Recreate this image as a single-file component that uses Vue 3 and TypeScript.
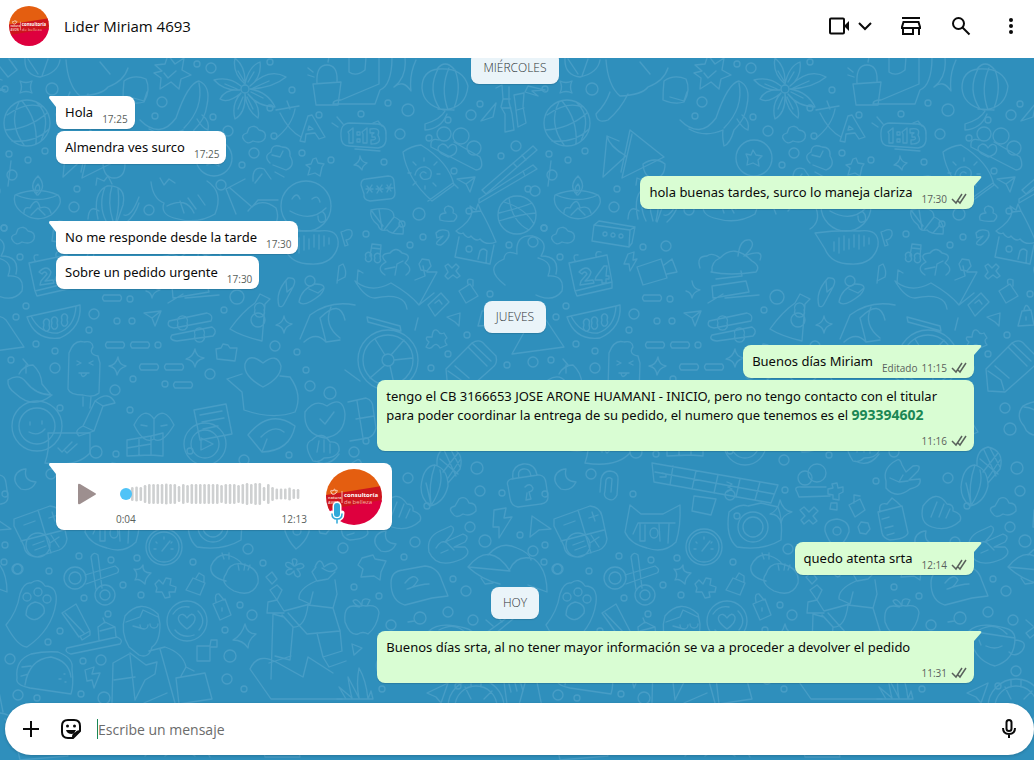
<script setup lang="ts">
import { ref } from 'vue'

interface Message {
  kind: 'note' | 'voice'
  from: 'in' | 'out'
  tail?: boolean
  block?: boolean
  lines?: string[]
  phone?: string
  edited?: boolean
  time: string
}
interface Entry {
  day?: string
  messages?: Message[]
}

const draft = ref('')
const position = ref(0)

const entries: Entry[] = [
  { day: 'MIÉRCOLES' },
  {
    messages: [
      { kind: 'note', from: 'in', tail: true, lines: ['Hola'], time: '17:25' },
      { kind: 'note', from: 'in', lines: ['Almendra ves surco'], time: '17:25' },
    ],
  },
  { messages: [{ kind: 'note', from: 'out', tail: true, lines: ['hola buenas tardes, surco lo maneja clariza'], time: '17:30' }] },
  {
    messages: [
      { kind: 'note', from: 'in', tail: true, lines: ['No me responde desde la tarde'], time: '17:30' },
      { kind: 'note', from: 'in', lines: ['Sobre un pedido urgente'], time: '17:30' },
    ],
  },
  { day: 'JUEVES' },
  {
    messages: [
      { kind: 'note', from: 'out', tail: true, lines: ['Buenos días Miriam'], edited: true, time: '11:15' },
      {
        kind: 'note',
        from: 'out',
        block: true,
        lines: [
          'tengo el CB 3166653 JOSE ARONE HUAMANI - INICIO, pero no tengo contacto con el titular',
          'para poder coordinar la entrega de su pedido, el numero que tenemos es el ',
        ],
        phone: '993394602',
        time: '11:16',
      },
    ],
  },
  { messages: [{ kind: 'voice', from: 'in', tail: true, time: '12:13' }] },
  { messages: [{ kind: 'note', from: 'out', tail: true, lines: ['quedo atenta srta'], time: '12:14' }] },
  { day: 'HOY' },
  {
    messages: [
      {
        kind: 'note',
        from: 'out',
        tail: true,
        block: true,
        lines: ['Buenos días srta, al no tener mayor información se va a proceder a devolver el pedido'],
        time: '11:31',
      },
    ],
  },
]

const bars: number[] = [
  14, 15, 14, 18, 20, 20, 20, 20, 21, 20, 20, 16, 20, 18, 20, 20, 20, 20, 20, 20, 20, 18, 20, 20, 20, 18, 20, 22, 20, 22,
  22, 14, 20, 14, 11, 11, 11, 13, 10, 10,
]

const dots: number[][] = [
  [197, 64, 3], [211, 68, 5], [270, 62, 3], [5, 89, 3], [52, 89, 6], [162, 102, 5], [292, 90, 3], [155, 116, 3],
  [213, 117, 3], [228, 131, 5], [270, 108, 3], [319, 115, 3], [274, 136, 3], [254, 153, 5], [9, 154, 3], [28, 160, 3],
  [45, 151, 3], [242, 165, 3], [302, 153, 3], [331, 160, 3], [388, 103, 3], [408, 110, 6], [361, 114, 3], [480, 104, 3],
  [471, 115, 5], [448, 120, 3], [400, 134, 5], [429, 138, 3], [384, 162, 3], [516, 146, 5], [501, 156, 3], [454, 171, 3],
  [528, 189, 3], [12, 175, 5], [535, 191, 5], [74, 207, 5], [77, 189, 3], [149, 210, 5], [221, 185, 5], [4, 228, 3],
  [419, 214, 6], [402, 224, 3], [366, 234, 3], [423, 237, 3], [410, 245, 3], [509, 245, 3], [533, 242, 5], [469, 211, 3],
  [544, 228, 3], [103, 247, 3], [126, 246, 5], [20, 257, 3], [310, 281, 5], [237, 297, 7], [130, 299, 3],
  [94, 314, 5], [117, 321, 3], [132, 321, 3], [89, 330, 3], [16, 317, 3], [36, 344, 3], [55, 351, 3], [158, 345, 3],
  [224, 310, 3], [275, 346, 5], [297, 352, 3], [11, 360, 3], [26, 306, 3], [55, 368, 5], [115, 390, 5], [133, 379, 3],
  [165, 384, 3], [210, 374, 5], [306, 370, 3], [310, 386, 5], [330, 393, 6], [490, 294, 3], [467, 335, 3], [448, 354, 3],
  [431, 368, 3], [507, 365, 3], [533, 362, 5], [465, 408, 5], [470, 429, 6], [354, 452, 5], [366, 441, 3], [477, 468, 6],
  [408, 478, 5], [480, 491, 5], [502, 493, 3], [51, 474, 5], [93, 494, 3], [96, 452, 6], [116, 454, 3], [190, 451, 3],
  [244, 460, 5], [289, 455, 3], [5, 494, 3], [60, 408, 3], [130, 410, 3], [190, 495, 5],
  [245, 490, 3], [336, 481, 3], [427, 506, 3], [470, 527, 5], [415, 542, 5], [404, 557, 3], [485, 541, 6],
  [520, 535, 3], [545, 545, 3], [533, 551, 5], [544, 562, 3], [557, 569, 5], [453, 579, 3], [466, 591, 5], [354, 587, 3],
  [379, 596, 3], [448, 612, 5], [391, 625, 5], [473, 620, 5], [79, 556, 3], [18, 569, 5], [49, 571, 3], [111, 560, 3],
  [123, 585, 3], [137, 558, 3], [141, 595, 3], [84, 598, 3], [108, 614, 3], [60, 631, 3], [48, 642, 3], [10, 659, 5],
  [83, 661, 3], [101, 660, 5], [18, 695, 5], [37, 698, 3], [81, 694, 3], [104, 698, 6], [230, 656, 6], [227, 679, 5],
  [244, 689, 3], [252, 615, 5], [225, 630, 3], [193, 562, 3], [240, 605, 3], [248, 549, 5], [263, 563, 3], [458, 686, 3],
  [476, 671, 5], [480, 735, 4], [382, 689, 3], [343, 548, 5], [326, 730, 5], [200, 731, 3], [120, 728, 4], [415, 725, 3],
]

// Each doodle: x, y of its origin, then the outline drawn around that origin.
const doodles: [number, number, string][] = [
  [26, 87, 'M-6-6Q0-3 6-6Q3 0 6 6Q0 3-6 6Q-3 0-6-6Z'],
  [10, 68, 'M-14-6L-2 9L7 2L-1-9M-20 8L-8 12'],
  [40, 65, 'M-15-7Q-16 10 0 12Q18 8 20-5M-12-6L-2 9M8-6L2 11'],
  [90, 82, 'M-24-22Q-22 4-10 14Q12 13 18 5Q34-1 38-14M-20 10Q-24 22-34 32Q-33 42-22 38Q-10 28-2 12M10-20L20-8'],
  [137, 88, 'M-13-7Q-3-14 9-9Q14 2 7 14Q-2 17-14 12Q-14 2-13-7ZM-7 9L7 13L10 4'],
  [170, 73, 'M-15-8L-5-9L-2-18L5-9L14-15L12-3L21 2L11 6L9 16L1 9L-10 16L-9 5L-16 0L-8-2ZM-6 0L-2 5L6-2'],
  [245, 89, 'M0-5Q-13-16-10-31Q1-22 0-5Q4-23 15-27Q17-12 5-3Q24-22 41-12Q28-1 5 0Q23 3 30 18Q12 17 3 5Q16 16 13 29Q2 22 0 5Q1 24-10 30Q-14 15-4 4Q-17 15-25 10Q-20 0-5 1Q-21 2-31-9Q-16-13-4-3M-7-18L-1-8M9-17L3-7M24-8L8-1M18 9L6 3M8 20L2 8M-7 20L-2 8M-20-5L-8 0'],
  [245, 89, 'M-4 0a4 4 0 1 0 8 0a4 4 0 1 0-8 0'],
  [190, 110, 'M-50 10Q-30 30-14 8Q-2-27 9-29Q21-24 17-5Q15 10 4 20Q0 34-6 36Q-8 26-7 20Q-25 28-41 19M9-27Q14-2-6 18M7 9Q13 19 18 20Q20 11 12 5'],
  [27, 123, 'M-23 0a23 23 0 1 0 46 0a23 23 0 1 0-46 0M-20-8Q0-22 15-16M-22 7Q2 6 20-10M-15 18Q8 20 22 6M-8-21Q-19 0-3 22M-5-22Q11-3 9 21M10-20Q25-6 14 18'],
  [277, 118, 'M-1-8L22-12M10-17L13-9M3-5Q12 13 24 19M18-9Q15 8-2 21'],
  [307, 133, 'M-7 8L1-17L5-18L18 4L12 6L8 0L-1 1L-2 9ZM2-7L6-4L1-3Z'],
  [253, 134, 'M-4-6Q2-10 6-4Q14-3 12 4Q9 10 0 7Q-6 11-9 6Q-13 1-6-1Z'],
  [327, 85, 'M-14-1L14-3L11 20L-11 20ZM-10-2Q-11-20 0-20Q11-20 10-3M-13-8L-19-10M-14-13L-19-17M1-23L2-28'],
  [367, 82, 'M-18-24L-18-10Q-11-5-2-12L-1-25M12-24V2L-26 18Q-34 18-34 22H8L13 8Q25 3 25-25'],
  [404, 74, 'M-10 13Q3 3 1-16M-10 13Q-1 5 7 17Q5 1 12-14'],
  [445, 88, 'M-23 0Q-23-17-7-19Q18-21 23-2Q21 20-1 22Q-22 17-23 0ZM-7-19Q-18 2-5 21M4-20Q-5 0 3 22M10-18Q17 0 9 20M-8-19Q0-29 9-19M-7 21L9 22M0 23Q-4 31-20 36V42Q-4 41 2 26'],
  [510, 105, 'M-14-17L-8-20L-7-6L-9 2L-5 9L-5 27L4 25L2 9L-1-3V-18M-7-6H0M-8 3H1M5-3L8 22L16 18L13 2L14-12L4-10ZM7 5L14 3M15-13L28-9L22-14L35-15L18-19ZM-17 12L-29 16L-14-2Z'],
  [365, 136, 'M-15-13L13-12Q22-11 21 0Q22 11 13 12L-16 10Q-24 10-24 0Q-25-13-15-13ZM8-13L13-15L17-10M-10 13L15 15M-28-19L-22-12M-33-13L-27-9'],
  [365, 136, 'M-17-4L-12-8V7H-16V-2ZM-8-4h3v3h-3ZM-8 3h3v3h-3ZM-3-4L2-8V7H-2V-2ZM5-7Q16-9 13-1Q18 8 6 8V4Q12 4 10 1H7V-2Q12-4 5-3Z'],
  [425, 174, 'M-22-22Q-14-28-4-29Q24-12 29 11L7 27Q-18 5-22-22ZM3 27L28 9L33 14M-10 1Q-8-8 1-7Q9-4 5 4Q-3 8-5 1Q-3-4 1-1M-14-1H-17M12 0H15M-1-13V-16M0 12V15M-9-9L-12-12M8 9L11 12M9-9L12-12M-9 8L-12 11'],
  [452, 143, 'M-15-9a7 7 0 1 0 14 0a7 7 0 1 0-14 0M1-7a8 8 0 1 0 16 0a8 8 0 1 0-16 0M15 5a7 7 0 1 0 14 0a7 7 0 1 0-14 0M-13-3Q-22-6-21 4L24 27Q33 26 28 14L2-1M-10 11Q-18 5-10 1Q-6 1-4 5Q0-1 4 3Q7 11-4 14Z'],
  [510, 172, 'M-28 18L23-26L27-22L-24 22ZM-31 27L23-7L27-3L-31 31ZM12-17L16-12M3-9L7-5M13-1L15 4'],
  [361, 163, 'M-1-7Q0-1 6 0Q1 3 1 7Q-2 2-7 2Q-1-1-1-7Z'],
  [379, 188, 'M-13-9L9-12Q15-12 15-6L16 5Q16 11 10 11L-9 13Q-16 12-15 6L-18-3Q-18-9-13-9ZM-12-2L-7 4M-7-3L-12 5M-13 1H-6M-2-2L3 4M3-3L-2 5M-3 1H4M8-3L12 3M12-4L8 4M7 0H14'],
  [467, 184, 'M-10-5L8-7L3 8L-1 0ZM-1 0L7-6'],
  [517, 215, 'M-19 0a19 19 0 1 0 38 0a19 19 0 1 0-38 0M-13-13Q8-7 17 9M-8-17Q-5 7 12 15M-18-2Q6-8 15-12M-18 6Q4-1 19-2'],
  [37, 205, 'M-22-10Q0-19 21-10Q28-2 14 10Q0 18-13 9Q-25 1-22-10ZM-21-10Q1-1 21-10M-13 8Q-13 1-7 3Q0-10 3 3Q12 0 14 8M-6 10L1 3L8 10M0-10Q-9-19 1-29Q10-19 1-10M0-12Q-4-16 1-21Q5-16 0-12'],
  [115, 205, 'M-17 14Q-23-12-8-19Q12-20 8 0L2 17M-10-18Q-17 0-9 16M-3-19Q-8-3-2 16M3-17Q5 0 1 16M-16 6Q-26-1-27 14M9 10Q16 13 24-8M12 17Q20 10 24-2M-19-20L-18-27L-11-24L-7-29L-3-21'],
  [185, 200, 'M-34-18Q-32-1-21 3Q-25 14-11 18Q12 25 30 14Q39-8 22-19M-18 6Q1-4 9 13M-5 1L-1 13M3-2L11 9M13-5L20 5M-25-22L-21-15L-16-21L-10-17'],
  [250, 198, 'M-24-9L-5-19M-24-9L-14 16M-20-10L2 9L8 2L28 2M-2 13Q10-2 26 10Q31 24 20 31'],
  [306, 206, 'M-25 0a25 25 0 1 0 50 0a25 25 0 1 0-50 0M-14-7Q-9-15-6-7M6-7Q12-12 14-4M-16 5Q5 17 20 2M12 10Q12 19 19 15Q21 10 17 6'],
  [309, 241, 'M-34-8Q-12-11 10-10Q31-13 29 5Q24 24 2 23Q-18 23-24 8ZM-15 1V10M-10-3V12M-5-5V9M0-2V8M5-6V6M10-6V8M15-5V5M20-3V3'],
  [254, 157, 'M-1 24Q-2 8 10 12L17 22M1 26L8 17'],
  [37, 153, 'M-26 8L-29 33'],
  [277, 153, 'M-7 10Q-14 3-6-1Q-5-10 5-6Q14-6 13 3Q19 13 9 17L-4 12M-5 2L3 4L6-2M-2 19L7 24'],
  [214, 158, 'M-18 0a18 18 0 1 0 36 0a18 18 0 1 0-36 0M-1-8L2-3L8-2L4 2L5 8L-1 5L-7 7L-6 1L-8-4L-3-3Z'],
  [71, 150, 'M-4-14L-8 27L15 6Q-2-4-4-14M-4-14L8-9M10 22L19-20L53 7L11 28L21-16M32 14Q44 6 54 14Q54 28 43 28Q33 28 32 14Z'],
  [314, 167, 'M-1-8L2-9L4-4L10-3L8 0L6 9L1 6L-6 8L-4 1L-8-2L-3-3Z'],
  [385, 222, 'M-14-12Q9-17 9-5Q20-1 18 12Q5 12 2 8Q-5 10-7 3Q-16-4-14-12ZM-14-12L-2 4M-6-13L-3 7M9-5L-1 8M15 3L8 11'],
  [447, 213, 'M-7 7Q-9 0-1 0Q-5-5 1-7Q8-6 6 0Q13 2 7 8Q-1 9-7 7Z'],
  [478, 240, 'M-22-9Q-7-19-6-28L3-29Q10-17 18 2M-22-9Q-18-5-15-7Q-10 0-7-4Q-2 2 2-1Q8 6 18 2M-19-3L-23 17L12 24L16 5M0 19L2 11Q5 7 9 11L8 23M-12 9a3 3 0 1 0 6 0a3 3 0 1 0-6 0M-6-28L-8-34L-2-30L0-36L3-29'],
  [374, 252, 'M-4 4L-2-8L7-7L6 5M-2-4L7-3M-8 5a3 3 0 1 0 5 0a3 3 0 1 0-5 0M1 6a3 3 0 1 0 5 0a3 3 0 1 0-5 0'],
  [347, 236, 'M-3-5Q6-9 5-1Q3 4-1 4L1 9L-2 10L-6-4Z'],
  [442, 237, 'M-6-4Q-2-9 6-6Q10 0-1 8Q-7 8-5 5L1-1L-5 1Z'],
  [425, 265, 'M-6-1L-3-6L4-5L6 1L2 6L-4 5Z'],
  [452, 271, 'M-7-5L-4-7L0-3L4-7L7-4L4 0L8 5L5 7L1 4L-4 8L-7 5L-4 1Z'],
  [395, 261, 'M-10 14Q-20 7-9 1Q-17-7-5-8Q1-15 7-8Q18-6 10 2Q19 8 11 14M-10 8L0 6M0 14L2 3L8 0'],
  [341, 274, 'M-4 9L-2-8L2-10Q6-3 4 3L-4 7M16 9L17-4L22-1'],
  [72, 234, 'M-18-9L-13-13L23-7L20 9L17 13L-20 7ZM-18-9L18-4L17 13M18-4L23-7M-9 0a2 2 0 1 0 4 0a2 2 0 1 0-4 0M-1 1a2 2 0 1 0 4 0a2 2 0 1 0-4 0M7 2a2 2 0 1 0 4 0a2 2 0 1 0-4 0'],
  [22, 235, 'M-4-6Q2-10 6-4Q14-3 12 4Q9 10 0 7Q-6 11-9 6Q-13 1-6-1Z'],
  [91, 262, 'M-3-8L3-10L2-2L6-3L-1 9L-2 2L-7 2Z'],
  [113, 270, 'M-16-3L8-11L14 8L-10 15ZM11-5L19-11L24 2L14 4'],
  [50, 274, 'M-21-11L17-19L22 8L-15 17ZM-15 17L-13 22L22 14V8M-15-13Q-18-20-12-19M6-17Q5-24 11-22M-11-2Q-3-10 1-2Q0 3-5 7L3 6L4 9L-10 11L-9 7L-3 0Q-5-4-8 0ZM6 3L14-8L17-8L16 2H19V5H16V9L12 9V6L5 6Z'],
  [6, 287, 'M-8-29Q8-25 2-11Q19-12 16 4Q7 16-10 8'],
  [525, 270, 'M-20 15Q-42-2-21-11Q-20-21-8-16Q-10-36 8-34Q25-29 16-14Q35-14 31 4'],
  [190, 270, 'M-30-2Q-34-14-23-14Q-18-18-10-12Q-19-8-18 1M-10-12Q4-27 22-9Q31-4 26 2Q0 6-19 2M8-14Q10-32 20-30Q27-25 14-14Q35-22 30-10'],
  [112, 298, 'M-8-3H8Q11 0 8 3H-8Q-11 0-8-3Z'],
  [115, 345, 'M-8-3H8Q11 0 8 3H-8Q-11 0-8-3Z'],
  [140, 345, 'M-8-3H8Q11 0 8 3H-8Q-11 0-8-3Z'],
  [149, 367, 'M-8-3H8Q11 0 8 3H-8Q-11 0-8-3Z'],
  [174, 367, 'M-8-3H8Q11 0 8 3H-8Q-11 0-8-3Z'],
  [183, 385, 'M-8-3H8Q11 0 8 3H-8Q-11 0-8-3Z'],
  [53, 321, 'M-26-4Q-18 20 7 17Q29 7 27-16L23-15Q22 6 5 12Q-13 13-22-5ZM-22-5L23-15M-9 4a3 4 0 1 0 5 0a3 4 0 1 0-5 0M-1 2a3 4 0 1 0 5 0a3 4 0 1 0-5 0M9-1a3 4 0 1 0 5 0a3 4 0 1 0-5 0'],
  [153, 318, 'M-9-5L8-7L2 8L-1 0ZM-1 0L8-7'],
  [190, 320, 'M-21 1L17-7Q24-5 21 1L-16 8Q-24 7-21 1ZM-12 3a5 5 0 1 0 9 0a5 5 0 1 0-9 0M-18 15L22 7Q28 11 23 16L-13 21Q-22 20-18 15ZM5 15a5 5 0 1 0 9 0a5 5 0 1 0-9 0'],
  [190, 288, 'M-18-2L16-7L19 4L-17 10ZM-22 15L-7 6M-5 10L29 7M-14-9L12-12L11-17'],
  [250, 320, 'M10-26L20-21L15-16L12 21Q-9 16-20 9Q-8-8 5-17ZM5-10a5 5 0 1 0 9 0a5 5 0 1 0-9 0M1 0a7 7 0 1 0 14 0a7 7 0 1 0-14 0'],
  [287, 292, 'M-8 14Q-12 0 1-14Q11-15 6-5L-3 12Q-5 16-8 14ZM-1-11L0 0L6-5'],
  [312, 293, 'M-13 9Q-11-4 3-9Q18-9 8 2Q-8 15-13 9ZM-3-4L6 0L12-5'],
  [284, 324, 'M0-8Q1-1 8 0Q1 2 0 9Q-1 2-8 1Q-1-1 0-8Z'],
  [118, 366, 'M0-9Q1-1 8 0Q1 2-1 9Q-2 1-9 0Q-2-1 0-9Z'],
  [195, 358, 'M0-9Q1-1 9 0Q1 2 0 9Q-1 2-9 1Q-2-1 0-9Z'],
  [152, 290, 'M0-9Q1-1 8 0Q1 2 0 8Q-1 2-6 1'],
  [540, 330, 'M-28 24L-8-12Q0-16 6-10L24 17Z'],
  [84, 363, 'M-16 26L-15-10Q-10-24 0-21Q8-23 9-16Q4-9 14-7Q15-3 16 0L15 30Q9 35-1 32Q-14 32-16 26ZM-7-2L-3 0L-7 2M9-2L5 0L9 2M-5 10H5M-3 10Q-2 17 3 10M-1 34V43M7 34L6 45'],
  [30, 372, 'M-22 8Q-11 1-4 10Q6 23 22 23Q3 38-14 22Q-23 16-22 8ZM-11 2Q-6-7 3-7Q11 0 12 12Q17 18 21 23M-7-13L-2-7M-4 1L-4-7'],
  [226, 353, 'M-10-4L-5-5L-3-9L2-8L4-5L11-5L9 8L-9 6Z'],
  [263, 372, 'M0 15Q-20 4-18-8Q-14-20 0-9Q14-20 18-6Q18 6 0 15Z'],
  [260, 390, 'M-33-11L-18-16M-33-11L-18 2L-16 20Q13 30 35 22Q43 5 30-13L20-14'],
  [340, 330, 'M-40 9L-30-15Q-10-30 15-25M-36 12Q-24 1-14 12L-20-12Q0-32 5-10M-14 12L0 10M-9-23Q-17-5 0 8'],
  [388, 360, 'M-30 0a30 30 0 1 0 60 0a30 30 0 1 0-60 0M-25 0a25 25 0 1 0 50 0a25 25 0 1 0-50 0M-6 0a6 6 0 1 0 12 0a6 6 0 1 0-12 0M-3-5L-13-21M3-5L16-20M6 0L25-2M2 6L6 24M-3 5L-18 18M-21-43L-20-38L13-29L12-34ZM27-30L30-42M-43 10L-28 21'],
  [395, 292, 'M-40-11Q-24 2-4-9Q15 2 24 13L42-20L32-20M-40-11Q-30 6-20 6Q10 0 12 17M24 13L39 1M20-12L30-16L28-26'],
  [437, 303, 'M-9 2L4-10L12-1L-2 13ZM-2 0L2-3L5 1'],
  [469, 291, 'M-10 0L1-7L9 5L-3 12ZM-1-7Q-3-14 4-11V-5'],
  [485, 318, 'M-7 8L-3-7L6-8L9 7ZM-1-8Q1-17 5-8M1-1V2'],
  [435, 339, 'M-8-2L-3-2Q-2-12 3-8Q5-4 9-6L12-1Q8 1 12 6L5 9Q2 3-2 7Q-5 11-9 8L-6 3Q-10 0-8-2Z'],
  [457, 320, 'M-10-3L3-7L2 6L-2 2Z'],
  [475, 360, 'M-29 9L-3-17Q5-22 10-15L21-4Q23 4 17 8L-10 32L-27 31ZM-27 11L-14 20L-11 30M-20 6L-6 18M-7-13L12 6M-3-17L16 1'],
  [37, 426, 'M-25 0a25 25 0 1 0 50 0a25 25 0 1 0-50 0M-18 0a18 18 0 1 0 36 0a18 18 0 1 0-36 0M-7-4V-1M5-5V-2M-8 6Q1 11 8 3'],
  [98, 413, 'M-15 13L-3-12L5-7L-4 18ZM-3-12Q11-23 17-10L5-7M-15 13Q-25 18-19 23L-4 18'],
  [154, 425, 'M-20 0Q-10-20 0-6Q10-20 20 0Q8 20 0 14Q-10 20-20 0ZM0-6L0 14M-13 0L-7 1M7 1L13 0'],
  [210, 420, 'M-16-10L16-16L22 14L-10 20ZM-10-5L12-9M-8 2L14-2M-7 9L8 6'],
  [270, 432, 'M-22 3Q0-24 25-6Q20 19-8 20ZM-9 5Q4-8 14 0M-8 20L-3 7'],
  [325, 420, 'M-20-8Q-10-22 2-14Q18-25 20-6Q20 15 0 18Q-22 14-20-8ZM-5-1L0 4L9-8'],
  [352, 420, 'M-4-18L14-22Q21-20 21-12L24 8Q22 16 16 18L-2 21M4-1L22-4M5-19L11 18'],
  [418, 424, 'M-18-10L4-18L20 8L-4 18ZM-8 0L10-8'],
  [498, 418, 'M-15-12Q6-23 13-7Q27 4 11 15Q-9 22-14 8Q-23-2-15-12ZM-14-11Q7-9 10 15'],
  [70, 450, 'M-22-17H20V3Q6 18-25 13Q-20-1-22-17ZM-12-2L-8 2L2-8M-5 1L-3 3L7-6'],
  [143, 452, 'M-16-12L8-16V3L-16 4ZM8-16L20-19V4L8 3M-4-14V3M-16-4L8-8'],
  [205, 444, 'M-21 0a21 21 0 1 0 42 0a21 21 0 1 0-42 0M-14 0a14 14 0 1 0 28 0a14 14 0 1 0-28 0M-4-6L8 0L-4 6Z'],
  [322, 450, 'M-9 11Q-20-6-10-10Q0-20 8-8Q18-9 17 1Q14 8 2 8Q-3 13-9 11ZM-5 2L-3-9M2 2L2-10M8 3L8-6M-7 11Q7 18 17 4'],
  [170, 475, 'M-58-12L68 10L61 28L-56 7ZM-37-9L-40 10M-14-4L-18 14M8 0L4 18M30 4L26 22M50 7L45 25M-55-3L64 19M-48-2L-44-1V2L-50 2M17 7L22 9L18 12L22 14L17 17'],
  [275, 487, 'M-17-9a7 7 0 1 0 14 0a7 7 0 1 0-14 0M-7-14a9 9 0 1 0 18 0a9 9 0 1 0-18 0M-18 5Q-22-1-13 0L11 0M-18 5L-16 10L15 9M17-3L22-4L23 1L28 0V5L24 7V13L18 12V8L13 7V2L18 1Z'],
  [362, 478, 'M-16 3Q-20-10-5-18Q-2-20 0-13L4-6L11-12Q20-14 16-7L7 2L18 1Q20 8 8 11Q-6 22-16 10ZM-12 0L-3 4L1-3M-3 4L6 3'],
  [440, 475, 'M-19 12Q-17-9-5-10Q8-6 8 11Q4 28-10 31Q-19 24-19 12ZM-14 8Q-12 15-9 30M-5-10Q-12 10-9 29M0-5Q4 10-8 29M-3-10Q-4-25 8-28Q25-24 20-6L8 8M4-25L16 1M10-27L20-8M0-16L18-1M18-22L3-3M20-15L8 3'],
  [528, 485, 'M-17-6L10-10Q17-10 18-2L20 12Q20 18 13 19L-10 22Q-17 21-18 13L-20 1Q-22-4-17-6ZM-15-6Q-17-19-5-21Q7-22 9-10M-9-7Q-11-15-5-16Q2-17 3-9M-3 2Q2-3 5 3Q5 6 1 7L3 14L-2 15L-1 8'],
  [25, 480, 'M1-11Q-2 1 11 2Q6 12-4 9Q-14 1-8-7Q-4-11 1-11Z'],
  [72, 485, 'M-12 7L-11-6Q-9-14-2-14Q7-13 6-5L5 10Q2 17-4 14Q-9 12-7 6L-6-5Q-4-9 0-6L-1 7'],
  [213, 527, 'M-24-15Q-14-24-5-21L8-24L25-20Q30-8 28 13Q10 24-16 20Q-28 10-24-15ZM-15 0a15 15 0 1 0 30 0a15 15 0 1 0-30 0M-10 0a10 10 0 1 0 20 0a10 10 0 1 0-20 0M-19-11a3 3 0 1 0 6 0a3 3 0 1 0-6 0'],
  [240, 512, 'M0-12Q3-1 12 0Q2 3 1 11Q-1 2-10 2Q-2-1 0-12Z'],
  [160, 506, 'M-6-10L16-7L11 9L-8 5Z'],
  [269, 515, 'M-9-5L-5-8L0-3L5-8L9-4L4 1L8 6L4 9L0 5L-5 9L-8 5L-4 1Z'],
  [297, 531, 'M-12 0Q-13-11 0-12Q13-10 12 1Q8 12-1 18Q-9 10-12 0ZM-4 0a4 4 0 1 0 8 0a4 4 0 1 0-8 0'],
  [324, 528, 'M-6-1L-3-6L4-5L6 1L2 6L-4 5Z'],
  [294, 506, 'M-3-3L3-3L3 4L-4 3Z'],
  [316, 507, 'M-7-2L4-8L9 3L-1 10ZM-2-4L-2-12L4-11'],
  [352, 522, 'M-14-10L10-16L16 11Q14 17-2 18Q-9 16-10 11ZM-12-10Q-14-20-5-18L0-24L5-20L9-16M-10-3L-3-5M-7 6L1 4M-5 13L2 11'],
  [399, 512, 'M-16-6Q-3-24 8-8Q15-8 14-1Q24 2 21 9Q9 20-7 15Q-20 11-16-6ZM-8 5L-2-10M0 5L5-8M7 6L11-3'],
  [463, 508, 'M-4-9Q3-13 6-5Q14-5 13 3Q7 9 0 6Q-7 11-10 6Q-16 0-8-2Z'],
  [502, 522, 'M-8-12L4-14L2-4L10-5L-3 16L-3 5L-9 5Z'],
  [537, 527, 'M-5-11L14 2L2 3L-7 10Z'],
  [385, 542, 'M1-11Q-2 1 11 2Q6 12-4 9Q-14 1-8-7Q-4-11 1-11Z'],
  [448, 544, 'M-19 8Q-22-7-8-13L3-18Q8-16 3-9L-3-2L15-10Q22-8 17-2L6 3L17 3Q24 9 14 15Q-11 26-19 8ZM-12 4Q-7-5-1-1L6 6M-7 9L0 6'],
  [44, 539, 'M-30-20L6-33Q16-32 18-23L23 0Q22 8 15 11L-7 18Q-19 17-20 7L-30-13ZM-23 2L20-9M-6-29L7 14M-20-14L-9-18M5-21L14-24M8-27L11-18M6 4L15-2M7-4L15 8M-18 6a12 12 0 1 0 24 0a12 12 0 1 0-24 0M-11 6L0 2M-9 11L2 7'],
  [115, 526, 'M-25-21L-14-12H8L25-21Q26 0 21 16Q9 28-8 22Q-25 18-30 6ZM-22 8L-17-3H20M-15-3L-15 15L-10 15V-1M4-2L5 15M14-2L13 17M-5 7a4 5 0 1 0 8 0a4 5 0 1 0-8 0'],
  [164, 547, 'M-18 0a18 18 0 1 0 36 0a18 18 0 1 0-36 0M-15 0a15 15 0 1 0 30 0a15 15 0 1 0-30 0M0-10V-8M8-5L7-4M-8-5L-7-4M-10 2H-8M9 2H7M-2 4L6-6'],
  [95, 578, 'M-31 0a11 11 0 1 0 22 0a11 11 0 1 0-22 0M-26 0a6 6 0 1 0 12 0a6 6 0 1 0-12 0M0 17a10 10 0 1 0 20 0a10 10 0 1 0-20 0M5 17a5 5 0 1 0 10 0a5 5 0 1 0-10 0M-10-3L20-12Q26-8 22-5L-9 6M-4-21Q-2-27 3-23L7 10M-4-21L1 11'],
  [142, 575, 'M1-10Q0-2 9-2Q3 3 3 9Q-3 3-7 5Q-3-1-8-6Q-2-4 1-10Z'],
  [165, 588, 'M-10-4L-6-8L-2-4L1-10L6-9L5-3L11-1L10 4L4 4L5 9L0 10L-3 4L-9 4L-8 0Z'],
  [196, 586, 'M-10 4L-3-8L9-3L4 9ZM0-8L3-13L8-10V-4'],
  [222, 608, 'M-9-4L3-9L9 7L-2 12ZM-6-6Q-8-15-3-14L2-8M0 0V3'],
  [235, 575, 'M-24-9Q-18-22-7-20Q4-16 7-11Q25-7 23 8Q17 23-1 16Q-16 8-9-1Q-5-13 7-11M-24-9Q-26 2-9 6M-13-22L-11-16M-6-22L-6-16M3-11L4-5M10-11L9-5M15-10L13-5'],
  [187, 621, 'M-20 0a20 20 0 1 0 40 0a20 20 0 1 0-40 0M-14-7Q-8-16 2-14M11-10Q20-1 12 9M7 14Q-5 18-12 9M0 8Q-11 0-8-5Q-4-9 0-3Q5-10 8-4Q9 2 0 8Z'],
  [30, 613, 'M-10-19Q-6-31 1-30Q9-36 15-27Q28-27 26-10Q22 17-3 34Q-12 34-24 12Q-13-1-10-19ZM-4 2Q-4-9 5-11Q16-9 14 0Q5 12-4 2M-7-16a4 4 0 1 0 8 0a4 4 0 1 0-8 0M4-21a4 4 0 1 0 8 0a4 4 0 1 0-8 0M13-14a4 4 0 1 0 8 0a4 4 0 1 0-8 0'],
  [77, 619, 'M-15-6L-1-15L13 12L2 18ZM-12-6L7 14M3 17L5 21L13 16V12'],
  [93, 645, 'M-26 3L24-8Q31-5 27-1L-22 9Q-29 7-26 3ZM6-5L5-18L12-23L22-18L23-8M7-14L22-18M12-22L10-27'],
  [45, 675, 'M-28 3Q-30-15-14-21Q0-24 13-23Q29-17 27-6Q29 10 26 19L-15 13Q-30 10-28 3ZM-20 10Q-16-16 6-18Q24-14 26 2M-24 1L-17-1M-23-8L-14-9M14 4h2M19-1h1M20 7h1'],
  [92, 678, 'M-7-8L2-11L0-4L8-5L2 10L0 2L-5 3Z'],
  [140, 655, 'M-11-8Q-20-23-15-39Q0-57 18-41L20-31Q20-13 12-8Q9 4-1 0L-11-8M-14-33L0-38L3-45L18-38M-7-29L4-26M0-30a4 4 0 1 0 8 0M10-31a4 4 0 1 0 8 0M-11-1L-27 8L-28 48M-10 0L-5 45L5 25L15 19L17 7L6 10L-10-2M9-4L25-8Q43-2 46 12M20-6L35 48M-26 25L-5 22M36 23L65 18L72 44L39 49ZM41 21L46 12L54 16M27 38L4 48'],
  [207, 654, 'M-10-8H3V7H-10ZM3-8L4-14H10V-7H4'],
  [245, 636, 'M0-12Q2-2 11-2Q3 4 3 12Q-2 4-12 4Q-3-1 0-12Z'],
  [294, 568, 'M0-2Q-4-10 1-9Q5-8 1-2Q8-7 10-2Q9 1 3 1Q9 7 4 9Q0 8 0 3Q-5 9-8 5Q-8 1-2 1Q-10-1-8-5Q-5-7 0-2Z'],
  [271, 578, 'M-5-1L1-6L6 1L1 6Z'],
  [318, 625, 'M-3-58Q2-70 6-58Q16-66 19-57Q14-50 4-57M-2-58L-6-53L-1-44L10-46L17-53M-2-44Q-20-36-19-26L-8-21L-5-33M-8-21L-34-14L-41-25M-41-25L-50-23L-51-12L-34-12M-41-25L-48-35L-41-40L-36-35ZM-36-10L-25 2Q-13 3-10-20L15-17L19-31L17-45M15-17L22 6L-11 9L-30-12M-45-11L-47 54M-45-11L-34-8L-25 2L-28 35L-43 31M-49 38L-27 31M-1 8L5 32L24 26L22 5M5 32L11 42L28 36M-68 44Q-60 27-42 37L-15 52L-10 32L15 48M-68 44L-47 74H24'],
  [372, 568, 'M-10-10L1-13L3-9L14-7L9 4L8 12L2 8L-11 9L-9 1L-14-3Z'],
  [418, 585, 'M-27-2Q-27-14-15-15L7-19Q20-18 24-4L30 11L14 13L-13 20Q-27 16-27-2ZM-13-2Q-4-13 0-5Q-5 4-11 4Q3-1 11-1'],
  [510, 570, 'M-42-3Q-20-30 0 1ZM0-1Q7-16 24-11Q37-1 37 22L18 15M-22-15Q-9-30 7-22Q20-17 21-10M-42-3Q-28 10-10 14M-29 8L-25 14L-17 13'],
  [362, 615, 'M-3-8Q-19-13-17 7Q-12 21-4 19Q1 16 6 19Q15 12 17-2Q16-11 4-9Q-1-10-3-8ZM0-9Q-5-18-9-14Q-6-8 0-9Q-1-19 8-15L5-9'],
  [419, 618, 'M-5 0a6 6 0 1 0 12 0a6 6 0 1 0-12 0M-5 3L-11 4'],
  [455, 640, 'M-26-9L20-2Q20 20 0 26Q-23 20-26-9ZM-26-9Q-16-19 10-12Q19-10 20-2M20 0Q34 1 27 11Q20 18 14 12M-16-10Q0-19 12-6M-16 0L-14 5M-9 6Q0 10 7 6'],
  [510, 635, 'M-24-2L-2-18L3-16L-20 3ZM-17-9L-24-15M-8-13L-14-20M9 10Q-4 13-8 20Q6 22 9 10Z'],
  [358, 648, 'M-6-4L4 0L-4 7Z'],
  [355, 690, 'M-18 9H18L16 1L13 9Q11-10 4-22Q1-6 4 8L-7-13Q-5 1-3 8L-16-3L-9 9'],
  [394, 668, 'M-17-7Q-20 5-8 14H10Q24 3 14-8M-10-1Q3-7 10 1'],
  [437, 691, 'M-10 2L11-8L4 12L-1 6Z'],
  [476, 707, 'M-28 0a28 28 0 1 0 56 0a28 28 0 1 0-56 0M-21 0a21 21 0 1 0 42 0a21 21 0 1 0-42 0M-5-27V-20M5-27V-20M-5-8L-11-20M8-8L16-16'],
  [518, 692, 'M-14-10L9-16L-1 20M-14-10L-11 12M2-9L18-15L25 20M-9-8L-7 0M-3-9L-1-1M3-8L5-1'],
  [40, 747, 'M-24-5Q-4-22 20-9L28 9L-20 13Z'],
  [5, 728, 'M-5-15Q14-13 8 6M0-9Q5-4 2 2'],
  [180, 752, 'M-35 4Q-13-18 18-7Q25-4 30 5M-15 4Q0-7 15 4'],
  [280, 748, 'M-18-9L15-13L20 9H-15ZM-8-2L10-5'],
  [390, 748, 'M-25 3Q-20-12 0-10Q18-8 21 5M-5-5V2M5-4V2'],
]
</script>

<template>
  <div class="app">
    <header class="topbar">
      <svg class="avatar" viewBox="0 0 56 56" role="img" aria-label="Consultoría de belleza">
        <defs>
          <clipPath id="avatar-round"><circle cx="28" cy="28" r="28" /></clipPath>
          <symbol id="avatar-art" viewBox="0 0 56 56">
            <g clip-path="url(#avatar-round)">
              <path d="M0 0H56V22L0 27Z" fill="#e45e10" />
              <path d="M0 26L56 17V33L0 42Z" fill="#cd151d" />
              <path d="M0 41L56 31V56H0Z" fill="#de003e" />
              <path d="M6 25q-3-5 1-3q2-4 2 0q4-2 1 2q-2 2-4 1Z" fill="none" stroke="#fbd5c3" />
              <path d="M16 22V34" stroke="#f6b5a5" />
              <text x="2" y="30" class="tiny-logo">natura</text>
              <text x="2" y="35" class="tiny-logo">AVON</text>
              <text x="18" y="28" class="logo-name">consultoría</text>
              <text x="18" y="35" class="logo-sub">de belleza</text>
            </g>
          </symbol>
        </defs>
        <use href="#avatar-art" width="56" height="56" />
      </svg>
      <h1 class="contact">Lider Miriam 4693</h1>
      <nav class="actions" aria-label="Acciones del chat">
        <button type="button" class="icon-button call" aria-label="Videollamada">
          <svg viewBox="0 0 24 24" class="icon"><path d="M4 4.500h12q1 0 1 1v13q0 1-1 1H4q-1 0-1-1v-13q0-1 1-1Z" fill="none" stroke="currentColor" stroke-width="2" /><path d="M17 12l5-5v10Z" fill="currentColor" /></svg>
          <svg viewBox="0 0 24 24" class="icon"><path d="M6 9l6 6 6-6" fill="none" stroke="currentColor" stroke-width="2" /></svg>
        </button>
        <button type="button" class="icon-button" aria-label="Catálogo">
          <svg viewBox="0 0 24 24" class="icon"><path d="M3 4h18M4.500 8h15l1.500 5v1H3v-1ZM4 14v6h10v-6M20 14v7" fill="none" stroke="currentColor" stroke-width="2" /></svg>
        </button>
        <button type="button" class="icon-button" aria-label="Buscar">
          <svg viewBox="0 0 24 24" class="icon"><circle cx="9.500" cy="9.500" r="5.500" fill="none" stroke="currentColor" stroke-width="2" /><path d="M13.500 13.500l7 7" stroke="currentColor" stroke-width="2" /></svg>
        </button>
        <button type="button" class="icon-button" aria-label="Menú">
          <svg viewBox="0 0 24 24" class="icon" fill="currentColor"><circle cx="12" cy="6" r="2" /><circle cx="12" cy="12" r="2" /><circle cx="12" cy="18" r="2" /></svg>
        </button>
      </nav>
    </header>

    <div class="stage">
      <svg class="wallpaper" aria-hidden="true">
        <defs>
          <pattern id="doodles" width="540" height="702" patternUnits="userSpaceOnUse">
            <g v-for="shift in [-540, 0, 540]" :key="shift" :transform="`translate(${shift} -58)`" fill="none" stroke="#479dc6" stroke-width="1.300" stroke-linejoin="round" stroke-linecap="round">
              <circle v-for="(d, i) in dots" :key="i" :cx="d[0]" :cy="d[1]" :r="d[2]" />
              <path v-for="(d, i) in doodles" :key="'p' + i" :transform="`translate(${d[0]} ${d[1]})`" :d="d[2]" />
            </g>
          </pattern>
        </defs>
        <rect width="100%" height="100%" fill="url(#doodles)" />
      </svg>

      <main class="conversation">
        <template v-for="(entry, e) in entries" :key="e">
          <div v-if="entry.day" class="day">{{ entry.day }}</div>
          <div v-else class="group">
            <article
              v-for="(m, i) in entry.messages"
              :key="i"
              class="bubble"
              :class="[m.from, m.kind, { tail: m.tail, block: m.block }]"
            >
              <svg v-if="m.tail" class="tail-mark" viewBox="0 0 8 12" aria-hidden="true">
                <path :d="m.from === 'in' ? 'M2 0H8V11L1 2Q1 0 2 0Z' : 'M0 0H6Q8 0 7 2L0 10Z'" fill="currentColor" />
              </svg>
              <template v-if="m.kind === 'note'">
                <p class="words">
                  <template v-for="(line, n) in m.lines" :key="n"><br v-if="n > 0" />{{ line }}</template><a v-if="m.phone" class="phone" :href="'tel:' + m.phone">{{ m.phone }}</a>
                </p>
                <div class="meta">
                  <span v-if="m.edited">Editado</span>
                  <time>{{ m.time }}</time>
                  <svg v-if="m.from === 'out'" class="ticks" viewBox="0 0 16 12" role="img" aria-label="Entregado">
                    <path d="M1 6l4 4 6-9M7 8l2 2 6-9" fill="none" stroke="currentColor" stroke-width="1.500" />
                  </svg>
                </div>
              </template>
              <template v-else>
                <button type="button" class="play" aria-label="Reproducir">
                  <svg viewBox="0 0 20 22"><path d="M1 2Q1 0 3 1L18 10Q20 11 18 12L3 21Q1 22 1 20Z" fill="#9d8f8f" /></svg>
                </button>
                <div class="player">
                  <div class="wave">
                    <svg viewBox="0 0 180 24" aria-hidden="true">
                      <rect v-for="(h, b) in bars" :key="b" :x="11 + b * 4.25" :y="12 - h / 2" width="2.6" :height="h" rx="1.300" fill="#ced0d1" />
                    </svg>
                    <input v-model.number="position" type="range" min="0" max="100" aria-label="Posición del audio" />
                  </div>
                  <div class="times"><span>0:04</span><time>{{ m.time }}</time></div>
                </div>
                <div class="sender">
                  <svg viewBox="0 0 56 56" class="sender-photo" aria-hidden="true"><use href="#avatar-art" width="56" height="56" /></svg>
                  <svg viewBox="0 0 16 24" class="sender-mic" aria-hidden="true">
                    <g fill="none" stroke-linecap="round">
                      <path d="M8 5v8M3 12q0 6 5 6t5-6M8 18v4" stroke="#fff" stroke-width="5" />
                      <path d="M8 5v8" stroke="#fff" stroke-width="9" />
                      <path d="M8 5v8" stroke="#2fa9d9" stroke-width="6" />
                      <path d="M3 13q0 5 5 5t5-5M8 18v4" stroke="#2fa9d9" stroke-width="1.500" />
                    </g>
                  </svg>
                </div>
              </template>
            </article>
          </div>
        </template>
      </main>

      <form class="composer" @submit.prevent>
        <button type="button" class="icon-button" aria-label="Adjuntar">
          <svg viewBox="0 0 24 24" class="icon"><path d="M12 4v16M4 12h16" stroke="currentColor" stroke-width="2" /></svg>
        </button>
        <button type="button" class="icon-button" aria-label="Stickers">
          <svg viewBox="0 0 24 24" class="icon">
            <path d="M9 3h6q6 0 6 6v5l-7 7H9q-6 0-6-6V9q0-6 6-6Z" fill="none" stroke="currentColor" stroke-width="2" stroke-linejoin="round" />
            <path d="M14 20q0-3 3-4q1-2 4-2" fill="none" stroke="currentColor" stroke-width="2" />
            <path d="M7 13h10q-1 3-4 4q-5 0-6-4Z" fill="currentColor" />
            <circle cx="8.500" cy="9" r="1.500" fill="currentColor" /><circle cx="15.500" cy="9" r="1.500" fill="currentColor" />
          </svg>
        </button>
        <input v-model="draft" class="entry" type="text" placeholder="Escribe un mensaje" aria-label="Escribe un mensaje" />
        <button type="button" class="icon-button" aria-label="Grabar audio">
          <svg viewBox="0 0 24 24" class="icon" fill="none" stroke="currentColor" stroke-width="2"><rect x="9.500" y="3" width="5" height="11" rx="2.500" /><path d="M6 11q0 6 6 6t6-6M12 17v4" /></svg>
        </button>
      </form>
    </div>
  </div>
</template>

<style>
body {
  margin: 0;
}
</style>

<style scoped>
.app {
  display: flex;
  flex-direction: column;
  height: 100vh;
  font-family: "Open Sans", "Noto Sans", sans-serif;
  font-size: 14px;
  color: #0a0a0a;
  background: #fff;
}
.topbar {
  display: flex;
  align-items: center;
  box-sizing: border-box;
  height: 58px;
  padding: 0 11px 6px 9px;
  flex: none;
}
.avatar {
  width: 40px;
  height: 40px;
  margin-right: 15px;
}
.logo-name {
  font: 700 6px "Open Sans", sans-serif;
  fill: #fff;
}
.logo-sub {
  font: 6px "Open Sans", sans-serif;
  fill: #f8b0a8;
}
.tiny-logo {
  font: 700 4px "Open Sans", sans-serif;
  fill: #f6c9bd;
}
.contact {
  flex: 1;
  margin: 0;
  font-size: 15px;
  font-weight: 400;
}
.actions {
  display: flex;
  gap: 26px;
}
.icon-button {
  display: flex;
  align-items: center;
  padding: 0;
  border: 0;
  background: none;
  color: #0a0a0a;
}
.call {
  gap: 2px;
  margin-right: -4px;
}
.icon {
  display: block;
  width: 24px;
  height: 24px;
}
.stage {
  position: relative;
  display: flex;
  flex-direction: column;
  flex: 1;
  min-height: 0;
  background: #2f8fbc;
}
.wallpaper {
  position: absolute;
  inset: 0;
  width: 100%;
  height: 100%;
}
.conversation {
  position: relative;
  display: flex;
  flex-direction: column;
  justify-content: flex-end;
  gap: 12px;
  flex: 1;
  min-height: 0;
  padding: 0 60px 20px 56px;
  overflow: hidden;
}
.day {
  align-self: center;
  flex: none;
  padding: 0 12px;
  border-radius: 8px;
  font-size: 12px;
  font-weight: 300;
  line-height: 32px;
  color: #2c3336;
  background: #eaf4f9;
  box-shadow: 0 1px 1px rgba(11, 20, 26, 0.15);
}
.group {
  display: flex;
  flex-direction: column;
  flex: none;
  gap: 2px;
}
.bubble {
  position: relative;
  display: flex;
  align-items: flex-end;
  align-self: flex-start;
  gap: 9px;
  box-sizing: border-box;
  max-width: 65%;
  padding: 7px 7px 7px 9px;
  border-radius: 8px;
  color: #fff;
  background: #fff;
  box-shadow: 0 1px 1px rgba(11, 20, 26, 0.15);
}
.bubble.out {
  align-self: flex-end;
  color: #d9fdd3;
  background: #d9fdd3;
}
.bubble.in.tail {
  border-top-left-radius: 0;
}
.bubble.out.tail {
  border-top-right-radius: 0;
}
.tail-mark {
  position: absolute;
  top: 0;
  width: 8px;
  height: 12px;
}
.in .tail-mark {
  right: 100%;
}
.out .tail-mark {
  left: 100%;
}
.words {
  margin: 0;
  font-family: "Noto Sans", "Open Sans", sans-serif;
  font-size: 13px;
  line-height: 19px;
  color: #0a0a0a;
}
.phone {
  font-size: 14px;
  font-weight: 700;
  line-height: 1;
  color: #1b8755;
  text-decoration: none;
}
.meta {
  display: flex;
  align-items: center;
  gap: 4px;
  height: 12px;
  margin-bottom: -3px;
  font-size: 10px;
  line-height: 12px;
  color: #59615c;
}
.ticks {
  width: 16px;
  height: 12px;
}
.bubble.block {
  flex-direction: column;
  align-items: stretch;
  gap: 10px;
  width: 65%;
}
.block .meta {
  align-self: flex-end;
}
.bubble.voice {
  align-items: flex-start;
  gap: 0;
  width: 336px;
  padding: 6px 9px 5px 20px;
}
.play {
  width: 22px;
  height: 22px;
  margin-top: 14px;
  padding: 0;
  border: 0;
  background: none;
}
.play svg {
  display: block;
  width: 22px;
  height: 22px;
}
.player {
  width: 192px;
  margin: 13px 18px 0 18px;
}
.wave {
  position: relative;
  width: 180px;
  height: 24px;
  margin-left: 4px;
}
.wave svg {
  display: block;
  width: 100%;
  height: 100%;
}
.wave input {
  position: absolute;
  inset: 0;
  width: 100%;
  height: 24px;
  margin: 0;
  appearance: none;
  background: transparent;
}
.wave input::-webkit-slider-thumb {
  appearance: none;
  width: 12px;
  height: 12px;
  border-radius: 50%;
  background: #4fc3f7;
}
.times {
  display: flex;
  justify-content: space-between;
  margin-top: 7px;
  padding-right: 1px;
  font-size: 10px;
  line-height: 12px;
  color: #59615c;
}
.sender {
  position: relative;
  width: 56px;
  height: 56px;
}
.sender-photo {
  display: block;
  width: 56px;
  height: 56px;
}
.sender-mic {
  position: absolute;
  left: 3px;
  bottom: 0;
  width: 16px;
  height: 24px;
}
.composer {
  position: relative;
  display: flex;
  align-items: center;
  flex: none;
  gap: 16px;
  height: 52px;
  margin: 0 0 5px 5px;
  padding: 0 13px 0 14px;
  box-sizing: border-box;
  border-radius: 26px;
  background: #fff;
  box-shadow: 0 1px 3px rgba(11, 20, 26, 0.2);
}
.entry {
  flex: 1;
  min-width: 0;
  height: 20px;
  margin-left: -2px;
  padding: 0;
  border: 0;
  border-left: 1px solid #1b8755;
  outline: 0;
  font: inherit;
  color: #0a0a0a;
  background: none;
}
.entry::placeholder {
  color: #6b6b6b;
  opacity: 1;
}
</style>
